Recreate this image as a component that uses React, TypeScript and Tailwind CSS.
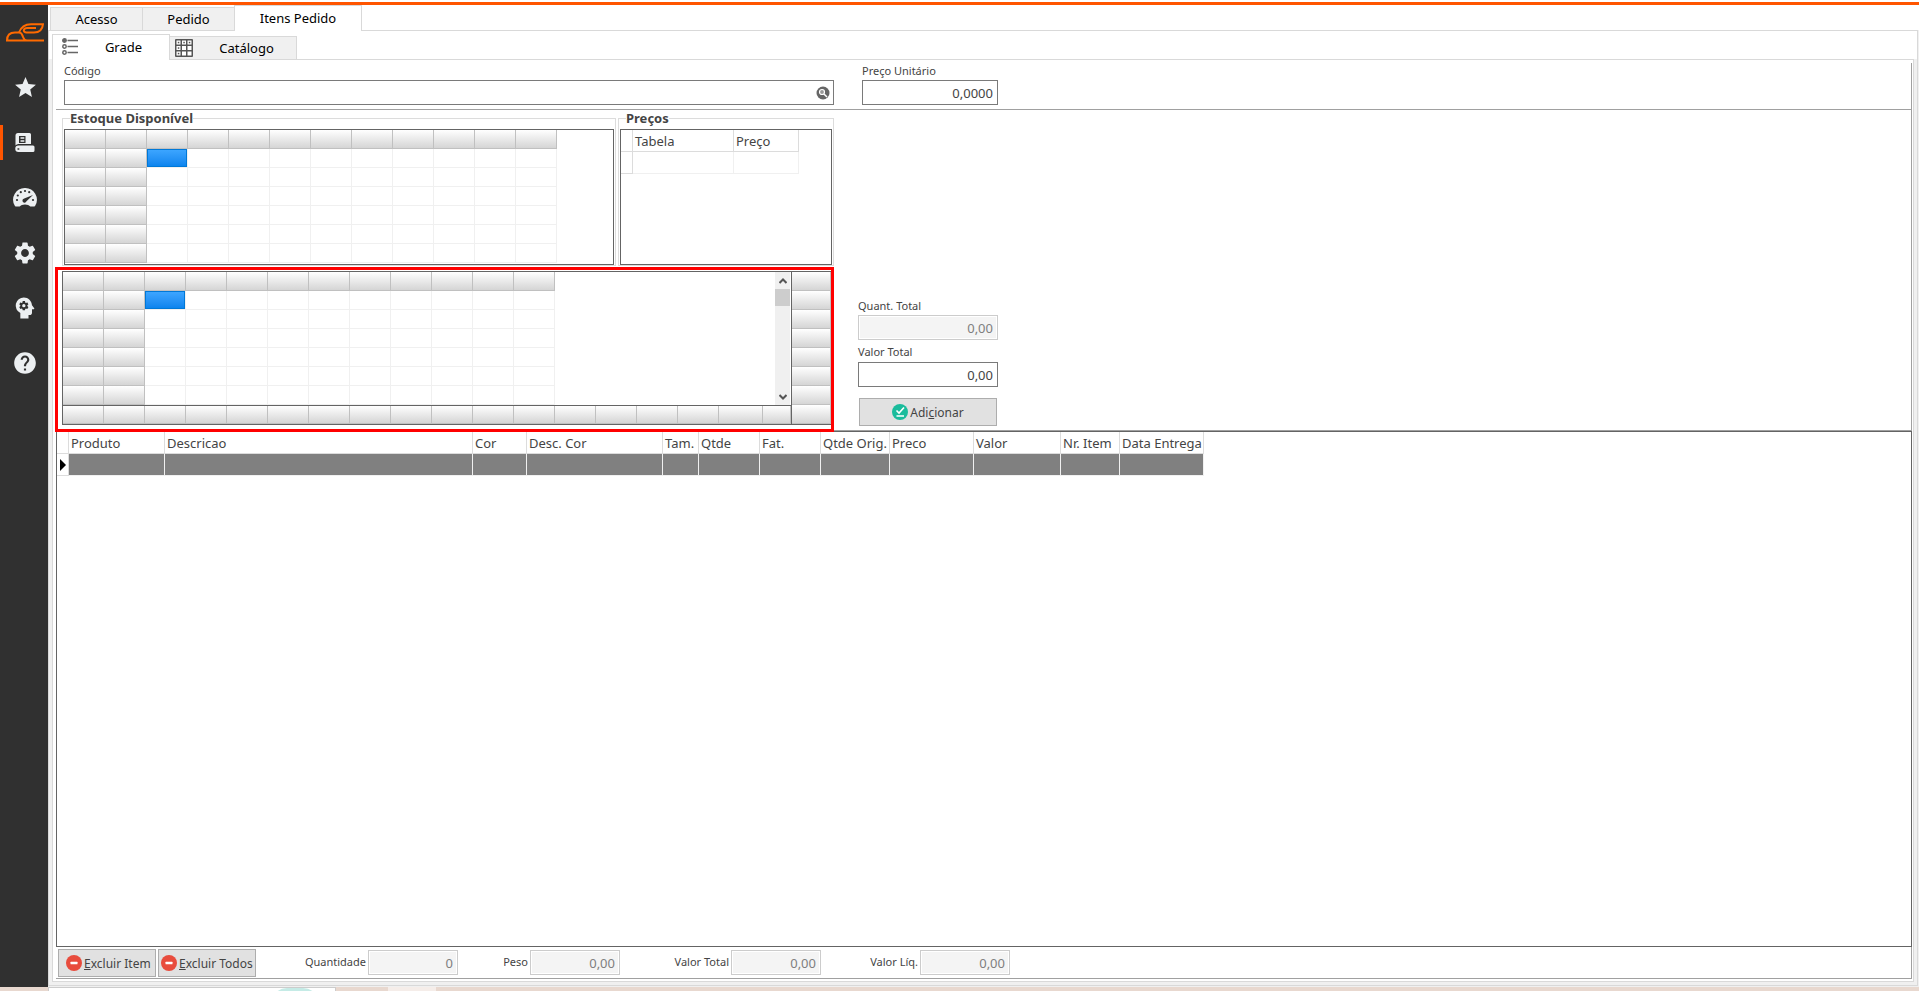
import { type ReactNode, useState } from "react";
import clsx from "clsx";
import { MdHelp, MdPsychology, MdSettings, MdStar } from "react-icons/md";

const itemColumns = [
  { label: "Produto", width: "w-[96px]" },
  { label: "Descricao", width: "w-[308px]" },
  { label: "Cor", width: "w-[54px]" },
  { label: "Desc. Cor", width: "w-[136px]" },
  { label: "Tam.", width: "w-[36px]" },
  { label: "Qtde", width: "w-[61px]" },
  { label: "Fat.", width: "w-[61px]" },
  { label: "Qtde Orig.", width: "w-[69px]" },
  { label: "Preco", width: "w-[84px]" },
  { label: "Valor", width: "w-[87px]" },
  { label: "Nr. Item", width: "w-[59px]" },
  { label: "Data Entrega", width: "w-[84px]" },
];

const totals = [
  { id: "quantidade", label: "Quantidade", value: "0", width: "w-[202px]" },
  { id: "peso", label: "Peso", value: "0,00", width: "w-[162px]" },
  { id: "total-itens", label: "Valor Total", value: "0,00", width: "w-[201px]" },
  { id: "valor-liquido", label: "Valor Líq.", value: "0,00", width: "w-[189px]" },
];

const fixedCell = "border-r border-b border-[#c0c0c0] bg-linear-to-b from-white to-[#d5d5d5]";

function range(n: number) {
  return Array.from({ length: n }, (_, i) => i);
}

function Logo() {
  return (
    <svg width="38" height="19" viewBox="0 0 38 19" fill="none" stroke="#ff6a00" strokeWidth="2">
      <path d="M38 17.500H1C1 12.500 4 9.500 9 9.500h4c3 0 3 2 4 4.500 .8 2 2 3.500 4 3.500" />
      <path d="M13 9.500C15 4 19 1.200 25 1.200h12C36.500 6.500 33 9.500 28 9.500h-7.500c-4 0-3.500-4.500 1-4.500H30" />
    </svg>
  );
}

function BookIcon() {
  return (
    <svg width="20" height="20" viewBox="0 0 20 20">
      <path fill="#eceff1" d="M3 0h11.500a1.500 1.500 0 0 1 1.500 1.500V11H3.500A3.500 3.500 0 0 0 .5 12.500V2.500A2.500 2.500 0 0 1 3 0Z" />
      <path fill="#eceff1" d="M3.500 12.500H18a1.500 1.500 0 0 1 1.500 1.500v3.500A1.500 1.500 0 0 1 18 19H3.500a3.200 3.200 0 0 1 0-6.500Z" />
      <path fill="#303030" d="M4 3h6.500v7H4zM2.500 15.300h1.800v1.500H2.500z" />
      <path fill="#eceff1" d="M5.500 4.200h3.800v1.500H5.500zM5.500 7.200h3.800v1.500H5.500z" />
    </svg>
  );
}

function GaugeIcon() {
  return (
    <svg width="24" height="19" viewBox="0 0 24 19">
      <path fill="#eceff1" d="M12 0a11.700 11.700 0 0 0-10.300 17.500c.3.600.7 1 1.500 1h3.500c1-1.300 3-2 5.300-2s4.300.7 5.300 2h3.500c.8 0 1.200-.4 1.500-1A11.700 11.700 0 0 0 12 0Z" />
      <g fill="#303030">
        <circle cx="4" cy="12" r="1.100" />
        <circle cx="4.800" cy="7.500" r="1.100" />
        <circle cx="7.800" cy="4.200" r="1.100" />
        <circle cx="12" cy="3" r="1.100" />
        <circle cx="16.200" cy="4.200" r="1.100" />
        <circle cx="20" cy="12" r="1.100" />
        <path d="m20 7-6.500 6.300a2.100 2.100 0 1 1-2.300-2.800Z" />
      </g>
    </svg>
  );
}

function Sidebar() {
  const entries = [
    { label: "Favoritos", icon: <MdStar size={25} /> },
    { label: "Cadastros", icon: <BookIcon />, active: true },
    { label: "Painel", icon: <GaugeIcon /> },
    { label: "Configurações", icon: <MdSettings size={26} /> },
    { label: "Inteligência", icon: <MdPsychology size={28} className="-scale-x-100" /> },
    { label: "Ajuda", icon: <MdHelp size={26} /> },
  ];
  return (
    <aside className="flex w-12 shrink-0 flex-col bg-[#303030] text-[#eceff1]">
      <div className="flex h-[55px] justify-center pt-[18px] pl-0.5">
        <Logo />
      </div>
      <nav className="flex flex-col">
        {entries.map((entry) => (
          <button key={entry.label} type="button" aria-label={entry.label} className="relative flex h-[55px] items-center justify-center pl-0.5">
            {entry.active && <span className="absolute top-[10px] left-0 h-[35px] w-[3px] bg-[#ff5500]" />}
            {entry.icon}
          </button>
        ))}
      </nav>
    </aside>
  );
}

function Tab({ active, className, children }: { active?: boolean; className?: string; children: ReactNode }) {
  return (
    <button
      type="button"
      role="tab"
      aria-selected={!!active}
      className={clsx(
        "flex items-center justify-center border-t border-r border-[#d9d9d9] text-[13px] leading-5 text-black",
        active ? "relative z-10 -mb-px h-[26px] border-l bg-white pb-0.5" : "bg-[#f0f0f0]",
        className,
      )}
    >
      {children}
    </button>
  );
}

function ListIcon() {
  return (
    <svg width="16" height="17" viewBox="0 0 16 17" fill="none" stroke="#666" strokeWidth="1.500">
      <path d="M5.500 2.500H16M5.500 8.500H16M5.500 14.500H16" />
      <circle cx="2.500" cy="2.500" r="1.700" fill="#666" />
      <circle cx="2.500" cy="8.500" r="1.700" />
      <circle cx="2.500" cy="14.500" r="1.700" />
    </svg>
  );
}

function CatalogIcon() {
  return (
    <svg width="18" height="18" viewBox="0 0 18 18">
      <rect width="18" height="18" rx="1" fill="#555" />
      {range(9).map((i) => (
        <rect key={i} x={1.5 + (i % 3) * 5.5} y={1.5 + Math.floor(i / 3) * 5.5} width="4" height="4" fill="#fff" />
      ))}
      {[0, 1, 2, 3, 6].map((i) => (
        <rect key={i} x={2.8 + (i % 3) * 5.5} y={2.8 + Math.floor(i / 3) * 5.5} width="1.500" height="1.500" fill="#555" />
      ))}
    </svg>
  );
}

function RemoveIcon() {
  return (
    <svg width="16" height="16" viewBox="0 0 16 16" className="shrink-0">
      <circle cx="8" cy="8" r="8" fill="#e84c3d" />
      <rect x="4.500" y="6.700" width="7" height="2.500" rx=".5" fill="#fff" />
    </svg>
  );
}

function ConfirmIcon() {
  return (
    <svg width="16" height="16" viewBox="0 0 16 16" className="shrink-0">
      <circle cx="8" cy="8" r="8" fill="#1abc9c" />
      <path d="m4.500 6.500 2.500 2.500 5-5.500M4.500 12h7.500" fill="none" stroke="#fff" strokeWidth="1.600" />
    </svg>
  );
}

function SizeGrid({ label }: { label: string }) {
  return (
    <table aria-label={label} className="w-[492px] table-fixed border-separate border-spacing-0">
      <tbody>
        {range(7).map((row) => (
          <tr key={row} className="h-[19px]">
            {range(12).map((col) => (
              <td
                key={col}
                className={clsx("p-0", row === 0 || col < 2 ? fixedCell : "border-r border-b border-[#f0f0f0]")}
              >
                {row === 1 && col === 2 && (
                  <div className="h-[18px] border border-[#0078d7] bg-linear-to-b from-[#3ca5ff] to-[#0a84ee]" />
                )}
              </td>
            ))}
          </tr>
        ))}
      </tbody>
    </table>
  );
}

function NumberBox({ id, value, disabled, className }: { id: string; value: string; disabled?: boolean; className: string }) {
  const [text, setText] = useState(value);
  return (
    <input
      id={id}
      value={text}
      disabled={disabled}
      onChange={(e) => setText(e.target.value)}
      className={clsx(
        "h-[25px] border px-1 text-right text-[13px] leading-5",
        disabled ? "border-[#cccccc] bg-[#f4f4f4] text-[#7f7f7f] inset-ring inset-ring-white" : "border-[#7a7a7a] bg-white text-[#444]",
        className,
      )}
    />
  );
}

function ProductSearch() {
  return (
    <section className="flex h-[47px] gap-7 border-r border-b border-[#a0a0a0] pl-2">
      <div className="flex w-[770px] flex-col gap-px">
        <label htmlFor="codigo" className="text-[11px] leading-4">Código</label>
        <div className="flex h-[25px] items-center border border-[#7a7a7a] pr-[3px]">
          <input id="codigo" className="h-full min-w-0 flex-1 px-1 text-[13px] outline-none" />
          <button type="button" aria-label="Pesquisar">
            <svg width="14" height="14" viewBox="0 0 14 14">
              <circle cx="7" cy="7" r="6.500" fill="#666" />
              <circle cx="6" cy="6" r="2.500" fill="#999" stroke="#fff" strokeWidth="1.200" />
              <path d="m8 8 3 3" stroke="#fff" strokeWidth="1.500" />
            </svg>
          </button>
        </div>
      </div>
      <div className="flex flex-col gap-px">
        <label htmlFor="preco-unitario" className="text-[11px] leading-4">Preço Unitário</label>
        <NumberBox id="preco-unitario" value="0,0000" className="w-[136px]" />
      </div>
    </section>
  );
}

function StockAndPrices() {
  return (
    <div className="flex gap-0.5 pl-1.5">
      <fieldset className="w-[554px] border border-[#dcdcdc] px-px">
        <legend className="ml-1.5 text-[13px] leading-4 font-bold">Estoque Disponível</legend>
        <div className="mt-[3px] h-[136px] overflow-hidden border border-[#646464]">
          <SizeGrid label="Estoque Disponível" />
        </div>
      </fieldset>
      <fieldset className="w-[216px] border border-[#dcdcdc] px-px">
        <legend className="ml-1.5 text-[13px] leading-4 font-bold">Preços</legend>
        <div className="mt-[3px] h-[136px] border border-[#646464]">
          <table className="w-[178px] table-fixed border-separate border-spacing-0 text-[13px] leading-5">
            <thead>
              <tr className="h-[22px] text-left">
                <th className="w-[12px] border-r border-b border-[#dcdcdc] p-0" />
                <th className="w-[101px] border-r border-b border-[#dcdcdc] p-0 pl-0.5 font-normal">Tabela</th>
                <th className="border-r border-b border-[#dcdcdc] p-0 pl-0.5 font-normal">Preço</th>
              </tr>
            </thead>
            <tbody>
              <tr className="h-[22px]">
                <td className="border-r border-b border-[#dcdcdc] p-0" />
                <td className="border-r border-b border-[#f0f0f0] p-0" />
                <td className="border-r border-b border-[#f0f0f0] p-0" />
              </tr>
            </tbody>
          </table>
        </div>
      </fieldset>
    </div>
  );
}

function ScrollBar() {
  return (
    <div className="mr-px flex w-[15px] flex-col bg-[#f0f0f0]">
      <button type="button" aria-label="Rolar para cima" className="flex h-[17px] items-center justify-center">
        <svg width="8" height="6" viewBox="0 0 8 6" fill="none" stroke="#555" strokeWidth="2">
          <path d="M.5 5 4 1.500 7.500 5" />
        </svg>
      </button>
      <div className="h-[17px] bg-[#cdcdcd]" />
      <button type="button" aria-label="Rolar para baixo" className="mt-auto flex h-[17px] items-center justify-center">
        <svg width="8" height="6" viewBox="0 0 8 6" fill="none" stroke="#555" strokeWidth="2">
          <path d="M.5 1 4 4.500 7.500 1" />
        </svg>
      </button>
    </div>
  );
}

function OrderGrid() {
  return (
    <div className="relative z-10 mt-px -mb-0.5 -ml-px flex h-[165px] w-[779px] border-[3px] border-[#ff0000] bg-white pt-px pl-1">
      <div className="h-[154px] w-[730px] border border-[#646464]">
        <div className="flex h-[133px] justify-between">
          <SizeGrid label="Quantidades do pedido" />
          <ScrollBar />
        </div>
        <div className="flex h-[19px] border-t border-[#646464]">
          {range(16).map((i) => (
            <div key={i} className={clsx("w-[41px] shrink-0", fixedCell)} />
          ))}
          <div className={clsx("w-[44px]", fixedCell)} />
          <div className={clsx("flex-1", fixedCell)} />
        </div>
      </div>
      <div className="h-[154px] flex-1 overflow-hidden border-t border-b border-[#646464]">
        {range(8).map((i) => (
          <div key={i} className={clsx("h-[19px]", fixedCell)} />
        ))}
      </div>
    </div>
  );
}

function OrderTotals() {
  return (
    <div className="flex w-[140px] flex-col pt-[188px]">
      <label htmlFor="quant-total" className="text-[11px] leading-4">Quant. Total</label>
      <NumberBox id="quant-total" value="0,00" disabled className="mt-px" />
      <label htmlFor="valor-total" className="mt-1 text-[11px] leading-4">Valor Total</label>
      <NumberBox id="valor-total" value="0,00" className="mt-0.5" />
      <button type="button" className="mx-px mt-[11px] flex h-7 items-center justify-center gap-0.5 border border-[#adadad] bg-[#e1e1e1] text-[12px] leading-5">
        <ConfirmIcon />
        <span className="pt-0.5">Adi<u>c</u>ionar</span>
      </button>
    </div>
  );
}

function ItemsTable() {
  return (
    <section className="flex-1 border border-[#646464]">
      <table className="w-[1147px] table-fixed border-separate border-spacing-0 text-[13px] leading-5">
        <thead>
          <tr className="h-[22px] text-left">
            <th className="w-[12px] border-r border-b border-[#dcdcdc] p-0" />
            {itemColumns.map((column) => (
              <th key={column.label} className={clsx("border-r border-b border-[#dcdcdc] p-0 pl-0.5 font-normal whitespace-nowrap", column.width)}>
                {column.label}
              </th>
            ))}
          </tr>
        </thead>
        <tbody>
          <tr className="h-[22px]">
            <td className="border-r border-b border-[#dcdcdc] p-0">
              <svg width="6" height="12" viewBox="0 0 6 12" className="ml-[3px]">
                <path d="M0 0v12l6-6Z" />
              </svg>
            </td>
            {itemColumns.map((column) => (
              <td key={column.label} className="border-r border-b border-[#f0f0f0] bg-[#808080] bg-clip-padding p-0" />
            ))}
          </tr>
        </tbody>
      </table>
    </section>
  );
}

function Footer() {
  return (
    <section className="flex h-8 border-r border-b border-[#a0a0a0] pt-0.5 pl-0.5">
      <div className="flex gap-0.5">
        <button type="button" className="flex h-7 w-[98px] items-center gap-0.5 border border-[#adadad] bg-[#e1e1e1] pl-[7px] text-[12px] leading-5 whitespace-nowrap">
          <RemoveIcon />
          <span className="pt-0.5"><u>E</u>xcluir Item</span>
        </button>
        <button type="button" className="flex h-7 w-[98px] items-center gap-0.5 border border-[#adadad] bg-[#e1e1e1] pl-0.5 text-[12px] leading-5 whitespace-nowrap">
          <RemoveIcon />
          <span className="pt-0.5"><u>E</u>xcluir Todos</span>
        </button>
      </div>
      {totals.map((total) => (
        <div key={total.id} className={clsx("flex justify-end gap-0.5 pt-px", total.width)}>
          <label htmlFor={total.id} className="pt-1 text-[11px] leading-4">{total.label}</label>
          <NumberBox id={total.id} value={total.value} disabled className="w-[90px]" />
        </div>
      ))}
    </section>
  );
}

export default function App() {
  return (
    <div className="flex min-h-screen flex-col bg-white font-['Noto_Sans','Open_Sans',sans-serif] text-[#444]">
      <div className="h-[5px] border-b-[3px] border-[#ff5500]" />
      <div className="flex flex-1">
        <Sidebar />
        <main className="flex min-w-0 flex-1 flex-col bg-[#f0f0f0] pr-px pb-px">
          <div role="tablist" aria-label="Pedido" className="-mr-px flex h-[25px] items-end bg-white pl-0.5">
            <Tab className="h-[23px] w-[93px] border-l">Acesso</Tab>
            <Tab className="h-[23px] w-[92px]">Pedido</Tab>
            <Tab active className="-ml-px w-[128px]">Itens Pedido</Tab>
          </div>
          <div className="flex flex-1 flex-col border border-[#d9d9d9] p-[3px] pt-0">
            <div role="tablist" aria-label="Itens Pedido" className="-mx-[3px] flex h-7 items-end bg-white px-[3px]">
              <Tab active className="w-[118px]">
                <span className="flex w-full items-center pl-[9px]">
                  <ListIcon />
                  <span className="flex-1 text-center">Grade</span>
                </span>
              </Tab>
              <Tab className="h-[23px] w-[127px]">
                <span className="flex w-full items-center pl-[5px]">
                  <CatalogIcon />
                  <span className="flex-1 pl-1 text-center">Catálogo</span>
                </span>
              </Tab>
            </div>
            <div className="flex flex-1 flex-col border border-[#d9d9d9] bg-white pt-[3px] pr-px pb-0.5 pl-[3px]">
              <ProductSearch />
              <section className="flex gap-6 border-r border-b border-[#a0a0a0]">
                <div className="w-[778px] shrink-0">
                  <StockAndPrices />
                  <OrderGrid />
                </div>
                <OrderTotals />
              </section>
              <ItemsTable />
              <Footer />
            </div>
          </div>
        </main>
      </div>
      <div className="flex h-1 bg-[#e8d8cf] pl-12">
        <div className="flex w-[288px] justify-center overflow-hidden border border-b-0 border-[#cccccc] bg-white pl-[206px]">
          <div className="h-8 w-12 shrink-0 rounded-full bg-[#c5ebe6]" />
        </div>
        <div className="ml-[52px] w-12 bg-[#f5ede9]" />
      </div>
    </div>
  );
}
